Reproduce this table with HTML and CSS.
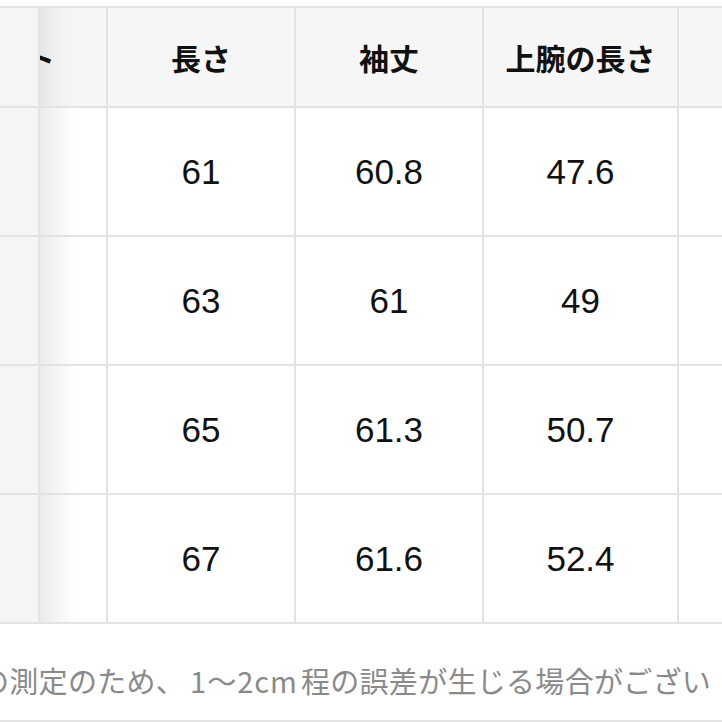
FILE: index.html
```html
<!DOCTYPE html>
<html lang="ja">
<head>
<meta charset="utf-8">
<link rel="stylesheet" href="styles.css">
</head>
<body>
<div class="page">
  <div class="sheet">
    <div class="cell head fixed"></div>
    <div class="cell head shade"><span class="clip">ウエスト</span></div>
    <div class="cell head">長さ</div>
    <div class="cell head">袖丈</div>
    <div class="cell head">上腕の長さ</div>
    <div class="cell head"></div>

    <div class="cell fixed"></div>
    <div class="cell shade"></div>
    <div class="cell num">61</div>
    <div class="cell num">60.8</div>
    <div class="cell num">47.6</div>
    <div class="cell"></div>

    <div class="cell fixed"></div>
    <div class="cell shade"></div>
    <div class="cell num">63</div>
    <div class="cell num">61</div>
    <div class="cell num">49</div>
    <div class="cell"></div>

    <div class="cell fixed"></div>
    <div class="cell shade"></div>
    <div class="cell num">65</div>
    <div class="cell num">61.3</div>
    <div class="cell num">50.7</div>
    <div class="cell"></div>

    <div class="cell fixed"></div>
    <div class="cell shade"></div>
    <div class="cell num">67</div>
    <div class="cell num">61.6</div>
    <div class="cell num">52.4</div>
    <div class="cell"></div>
  </div>
  <div class="foot">
    <p class="note">の測定のため、<span class="latin">1〜2cm</span>程の誤差が生じる場合がございます。</p>
  </div>
</div>
</body>
</html>
```

FILE: styles.css
```css
html, body {
  margin: 0;
  padding: 0;
  background: #ffffff;
}

.page {
  width: 722px;
  height: 722px;
  overflow: hidden;
  padding-top: 6px;
  box-sizing: border-box;
}

.sheet {
  display: grid;
  grid-template-columns: 38px 66px 186px 186px 193px 200px;
  grid-template-rows: 98px 127px 127px 127px 127px;
  gap: 2px;
  padding: 2px 0;
  background: #e3e3e3;
  width: 900px;
}

.cell {
  background: #ffffff;
  display: flex;
  align-items: center;
  justify-content: center;
  overflow: hidden;
  color: #111111;
}

.head {
  background: #f6f6f6;
  font-family: "Noto Sans CJK JP", "Noto Sans", sans-serif;
  font-weight: 700;
  font-size: 30px;
}

.fixed {
  background: #f5f5f5;
}

.shade {
  background: linear-gradient(to right, #ebebeb 0px, #f5f5f5 16px, #ffffff 36px);
  justify-content: flex-start;
}

.head.shade {
  background: linear-gradient(to right, #e6e6e6 0px, #f0f0f0 16px, #f6f6f6 36px);
}

.clip {
  white-space: nowrap;
  margin-left: -105px;
}

.num {
  font-family: "Liberation Sans", Arial, sans-serif;
  font-size: 35px;
}

.foot {
  border-bottom: 2px solid #e3e3e3;
  padding: 36px 0 20px;
}

.note {
  margin: 0;
  width: 714px;
  overflow: hidden;
  height: 40px;
  line-height: 40px;
  font-family: "Noto Sans CJK JP", "Noto Sans", sans-serif;
  font-size: 29px;
  color: #8a8a8a;
  white-space: nowrap;
  text-indent: -20px;
  letter-spacing: 0.3px;
}

.latin {
  letter-spacing: 1px;
  padding: 0 3px 0 5px;
}
```
